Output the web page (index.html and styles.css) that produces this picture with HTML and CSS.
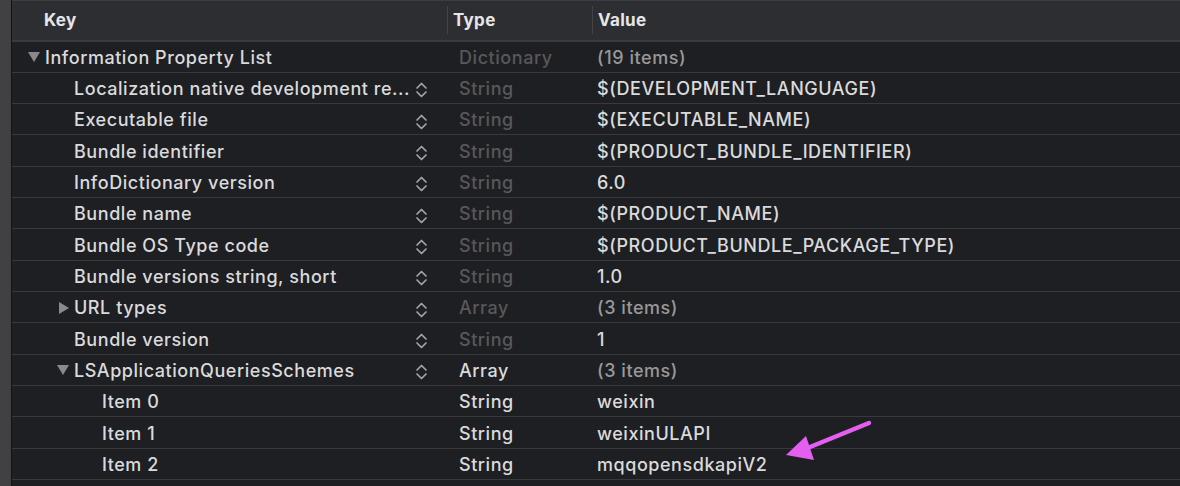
FILE: index.html
```html
<!DOCTYPE html>
<html>
<head>
<meta charset="utf-8">
<link rel="stylesheet" href="styles.css">
</head>
<body>
<div class="frame">
  <div class="gutter"></div>
  <div class="table">
    <div class="header">
      <div class="hcell key">Key</div>
      <div class="hcell type">Type</div>
      <div class="hcell value">Value</div>
    </div>

    <div class="row">
      <div class="cell key lvl0"><span class="tri down"></span><span class="ktext">Information Property List</span></div>
      <div class="cell type dim">Dictionary</div>
      <div class="cell value grey">(19 items)</div>
    </div>
    <div class="row">
      <div class="cell key lvl1"><span class="ktext">Localization native development re...</span><svg class="stepper" viewBox="0 0 13 18"><path d="M2 7 L6.5 2.5 L11 7 M2 11 L6.5 15.5 L11 11"/></svg></div>
      <div class="cell type dim">String</div>
      <div class="cell value">$(DEVELOPMENT_LANGUAGE)</div>
    </div>
    <div class="row">
      <div class="cell key lvl1"><span class="ktext">Executable file</span><svg class="stepper" viewBox="0 0 13 18"><path d="M2 7 L6.5 2.5 L11 7 M2 11 L6.5 15.5 L11 11"/></svg></div>
      <div class="cell type dim">String</div>
      <div class="cell value">$(EXECUTABLE_NAME)</div>
    </div>
    <div class="row">
      <div class="cell key lvl1"><span class="ktext">Bundle identifier</span><svg class="stepper" viewBox="0 0 13 18"><path d="M2 7 L6.5 2.5 L11 7 M2 11 L6.5 15.5 L11 11"/></svg></div>
      <div class="cell type dim">String</div>
      <div class="cell value">$(PRODUCT_BUNDLE_IDENTIFIER)</div>
    </div>
    <div class="row">
      <div class="cell key lvl1"><span class="ktext">InfoDictionary version</span><svg class="stepper" viewBox="0 0 13 18"><path d="M2 7 L6.5 2.5 L11 7 M2 11 L6.5 15.5 L11 11"/></svg></div>
      <div class="cell type dim">String</div>
      <div class="cell value">6.0</div>
    </div>
    <div class="row">
      <div class="cell key lvl1"><span class="ktext">Bundle name</span><svg class="stepper" viewBox="0 0 13 18"><path d="M2 7 L6.5 2.5 L11 7 M2 11 L6.5 15.5 L11 11"/></svg></div>
      <div class="cell type dim">String</div>
      <div class="cell value">$(PRODUCT_NAME)</div>
    </div>
    <div class="row">
      <div class="cell key lvl1"><span class="ktext">Bundle OS Type code</span><svg class="stepper" viewBox="0 0 13 18"><path d="M2 7 L6.5 2.5 L11 7 M2 11 L6.5 15.5 L11 11"/></svg></div>
      <div class="cell type dim">String</div>
      <div class="cell value">$(PRODUCT_BUNDLE_PACKAGE_TYPE)</div>
    </div>
    <div class="row">
      <div class="cell key lvl1"><span class="ktext">Bundle versions string, short</span><svg class="stepper" viewBox="0 0 13 18"><path d="M2 7 L6.5 2.5 L11 7 M2 11 L6.5 15.5 L11 11"/></svg></div>
      <div class="cell type dim">String</div>
      <div class="cell value">1.0</div>
    </div>
    <div class="row">
      <div class="cell key lvl1t"><span class="tri right"></span><span class="ktext">URL types</span><svg class="stepper" viewBox="0 0 13 18"><path d="M2 7 L6.5 2.5 L11 7 M2 11 L6.5 15.5 L11 11"/></svg></div>
      <div class="cell type dim">Array</div>
      <div class="cell value grey">(3 items)</div>
    </div>
    <div class="row">
      <div class="cell key lvl1"><span class="ktext">Bundle version</span><svg class="stepper" viewBox="0 0 13 18"><path d="M2 7 L6.5 2.5 L11 7 M2 11 L6.5 15.5 L11 11"/></svg></div>
      <div class="cell type dim">String</div>
      <div class="cell value">1</div>
    </div>
    <div class="row">
      <div class="cell key lvl1t"><span class="tri down"></span><span class="ktext">LSApplicationQueriesSchemes</span><svg class="stepper" viewBox="0 0 13 18"><path d="M2 7 L6.5 2.5 L11 7 M2 11 L6.5 15.5 L11 11"/></svg></div>
      <div class="cell type">Array</div>
      <div class="cell value grey">(3 items)</div>
    </div>
    <div class="row">
      <div class="cell key lvl2"><span class="ktext">Item 0</span></div>
      <div class="cell type">String</div>
      <div class="cell value">weixin</div>
    </div>
    <div class="row">
      <div class="cell key lvl2"><span class="ktext">Item 1</span></div>
      <div class="cell type">String</div>
      <div class="cell value">weixinULAPI</div>
    </div>
    <div class="row">
      <div class="cell key lvl2"><span class="ktext">Item 2</span></div>
      <div class="cell type">String</div>
      <div class="cell value">mqqopensdkapiV2</div>
    </div>
  </div>
  <svg class="arrow" width="100" height="50" viewBox="0 0 100 50">
    <line x1="87" y1="8" x2="28" y2="32" stroke="#e45ff0" stroke-width="4.5" stroke-linecap="round"/>
    <polygon points="4,40 24,21 32,45" fill="#e45ff0"/>
  </svg>
</div>
</body>
</html>
```
FILE: styles.css
```css
html, body {
  margin: 0;
  padding: 0;
  background: #1e1f22;
}
.frame {
  position: relative;
  display: flex;
  width: 1180px;
  height: 486px;
  overflow: hidden;
  background: #1e1f22;
  font-family: Inter, "Liberation Sans", sans-serif;
  font-size: 18px;
  letter-spacing: 0.55px;
  font-weight: 500;
  color: #dadadc;
}
.gutter {
  width: 11px;
  flex: none;
  background: #414143;
  border-right: 1px solid #121214;
}
.table {
  flex: 1;
  display: flex;
  flex-direction: column;
}
.header {
  box-sizing: border-box;
  height: 41.5px;
  display: grid;
  grid-template-columns: 435px 145px 1fr;
  align-items: center;
  background: #2d2e32;
  border-top: 1px solid #3c3d40;
  border-bottom: 2px solid #3a3b3e;
}
.hcell {
  font-weight: 700;
  font-size: 17px;
  letter-spacing: 0.3px;
  color: #e6e6e8;
  height: 28px;
  line-height: 28px;
}
.hcell.key { padding-left: 32px; }
.hcell.type, .hcell.value {
  border-left: 1px solid #424346;
  padding-left: 5px;
}
.row {
  box-sizing: border-box;
  height: 31.33px;
  padding-top: 1px;
  display: grid;
  grid-template-columns: 435px 145px 1fr;
  align-items: center;
  border-bottom: 1px solid #38393c;
}
.cell {
  white-space: nowrap;
  overflow: hidden;
}
.cell.key {
  display: flex;
  align-items: center;
  position: relative;
}
.lvl0 { padding-left: 16px; }
.lvl1 { padding-left: 62px; }
.lvl1t { padding-left: 45px; }
.lvl2 { padding-left: 90px; }
.tri {
  width: 0;
  height: 0;
  flex: none;
  margin-right: 5px;
}
.tri.down {
  border-left: 6px solid transparent;
  border-right: 6px solid transparent;
  border-top: 10px solid #8a8a8d;
}
.tri.right {
  border-top: 6px solid transparent;
  border-bottom: 6px solid transparent;
  border-left: 10px solid #8a8a8d;
  margin-left: 2px;
  margin-right: 5px;
}
.ktext { flex: none; }
.stepper {
  position: absolute;
  left: 403px;
  top: 50%;
  width: 13px;
  height: 18px;
  margin-top: -7px;
  fill: none;
  stroke: #a3a3a6;
  stroke-width: 1.7;
  stroke-linecap: round;
  stroke-linejoin: round;
}
.cell.type { padding-left: 12px; }
.cell.value { padding-left: 5px; }
.dim { color: #58585b; }
.grey { color: #98989b; }
.arrow {
  position: absolute;
  left: 782px;
  top: 415px;
}
```
